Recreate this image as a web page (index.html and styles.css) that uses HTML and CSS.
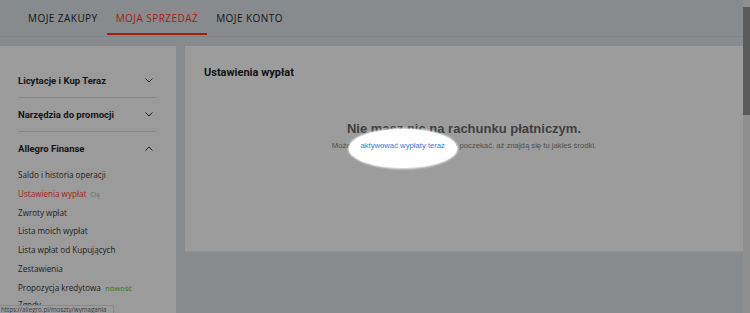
FILE: index.html
```html
<!DOCTYPE html>
<html lang="pl">
<head>
<meta charset="utf-8">
<title>Ustawienia wypłat</title>
<link rel="stylesheet" href="styles.css">
</head>
<body>
<div class="frame">
  <div class="page">
    <header class="topbar">
      <nav class="tabs">
        <a class="tab">MOJE ZAKUPY</a>
        <a class="tab active">MOJA SPRZEDAŻ</a>
        <a class="tab">MOJE KONTO</a>
      </nav>
    </header>
    <div class="main">
      <aside class="sidebar">
        <div class="section">
          <span>Licytacje i Kup Teraz</span>
          <svg class="chev" width="8" height="5" viewBox="0 0 8 5"><path d="M0.5 0.5 L4 4 L7.5 0.5" fill="none" stroke="#222" stroke-width="1"/></svg>
        </div>
        <div class="section">
          <span>Narzędzia do promocji</span>
          <svg class="chev" width="8" height="5" viewBox="0 0 8 5"><path d="M0.5 0.5 L4 4 L7.5 0.5" fill="none" stroke="#222" stroke-width="1"/></svg>
        </div>
        <div class="section open">
          <span>Allegro Finanse</span>
          <svg class="chev" width="8" height="5" viewBox="0 0 8 5"><path d="M0.5 4.5 L4 1 L7.5 4.5" fill="none" stroke="#222" stroke-width="1"/></svg>
        </div>
        <ul class="links">
          <li>Saldo i historia operacji</li>
          <li class="current">Ustawienia wypłat <span class="hint">Cię</span></li>
          <li>Zwroty wpłat</li>
          <li>Lista moich wypłat</li>
          <li>Lista wpłat od Kupujących</li>
          <li>Zestawienia</li>
          <li>Propozycja kredytowa <span class="new">nowość</span></li>
          <li class="last">Zgody</li>
        </ul>
      </aside>
      <section class="content">
        <h1 class="title">Ustawienia wypłat</h1>
        <div class="empty">
          <h2 class="empty-head">Nie masz nic na rachunku płatniczym.</h2>
          <p class="empty-text">Możesz <a class="spot-link">aktywować wypłaty teraz</a> lub poczekać, aż znajdą się tu jakieś środki.</p>
          <div class="spotlight"></div>
        </div>
      </section>
    </div>
  </div>
  <div class="scrollbar"><div class="thumb"></div></div>
</div>
<div class="status">https://allegro.pl/moszty/wymagania</div>
</body>
</html>
```

FILE: styles.css
```css
html, body {
  margin: 0;
  padding: 0;
  height: 100%;
  overflow: hidden;
}
body {
  background: #888b8e;
  font-family: "Open Sans", "Liberation Sans", sans-serif;
  color: #161616;
}
.frame {
  display: flex;
  height: 313px;
}
.page {
  flex: 1;
  display: flex;
  flex-direction: column;
  min-width: 0;
}
.scrollbar {
  width: 7px;
  background: #8f8f8f;
  padding-top: 7px;
  box-sizing: border-box;
}
.thumb {
  height: 108px;
  background: #5b5b5b;
}
.topbar {
  height: 36px;
  border-bottom: 1px solid #7f8386;
  box-sizing: content-box;
}
.tabs {
  display: flex;
  padding-left: 19px;
  height: 36px;
}
.tab {
  display: flex;
  align-items: center;
  padding: 2px 9px 0 9px;
  font-size: 10px;
  letter-spacing: 0.45px;
  color: #141414;
  height: 35px;
  box-sizing: border-box;
  border-bottom: 2px solid transparent;
}
.tab.active {
  color: #a51b10;
  border-bottom-color: #a51b10;
}
.main {
  flex: 1;
  display: flex;
  gap: 9px;
  padding-top: 9px;
  align-items: flex-start;
}
.sidebar {
  width: 176px;
  background: #9b9b9b;
  padding: 18px 20px 0 18px;
  box-sizing: border-box;
  align-self: stretch;
}
.section {
  height: 33px;
  display: flex;
  align-items: center;
  justify-content: space-between;
  font-family: Roboto, "Liberation Sans", sans-serif;
  font-weight: 700;
  font-size: 9.5px;
  color: #151515;
  border-bottom: 1px solid #878787;
  padding-right: 3px;
}
.section.open {
  border-bottom: none;
}
.links {
  list-style: none;
  margin: 0;
  padding: 1px 0 0 0;
  font-size: 8.1px;
  color: #1c1c1c;
}
.links li {
  height: 18.8px;
  line-height: 18.8px;
  white-space: nowrap;
}
.links li.current {
  color: #a51b10;
}
.links li.last {
  line-height: 14px;
}
.hint {
  color: #6e6e6e;
  font-size: 6.5px;
  margin-left: 2px;
}
.new {
  color: #287a22;
  font-size: 7.6px;
  margin-left: 2px;
}
.content {
  flex: 1;
  height: 206px;
  background: #9c9c9c;
  border-bottom: 1px solid #919191;
  padding: 20px 19px 0 19px;
  box-sizing: border-box;
}
.title {
  margin: 0;
  font-family: Roboto, "Liberation Sans", sans-serif;
  font-weight: 700;
  font-size: 11px;
  line-height: 14px;
  color: #121212;
}
.empty {
  position: relative;
  margin-top: 40px;
  text-align: center;
  font-family: "Liberation Sans", Arial, sans-serif;
}
.empty-head {
  margin: 0;
  font-size: 13px;
  line-height: 17px;
  font-weight: 700;
  color: #404040;
}
.empty-text {
  margin: 3px 0 0 0;
  font-size: 7.7px;
  line-height: 11px;
  color: #4e4e4e;
}
.spot-link {
  position: relative;
  z-index: 2;
  color: #2a7be4;
}
.spotlight {
  position: absolute;
  left: 145px;
  top: 9px;
  width: 108px;
  height: 39px;
  border-radius: 50%;
  background: #ffffff;
  box-shadow: 0 0 2px 1px rgba(255, 255, 255, 0.8);
  z-index: 1;
}
.status {
  position: fixed;
  left: 0;
  bottom: 0;
  width: 112px;
  height: 7px;
  background: #9c9c9c;
  border: 1px solid #8a8a8a;
  border-left: none;
  border-bottom: none;
  border-top-right-radius: 2px;
  font-size: 6.2px;
  line-height: 8px;
  color: #3c3c3c;
  overflow: hidden;
  white-space: nowrap;
  padding-left: 1px;
  z-index: 3;
}
```
